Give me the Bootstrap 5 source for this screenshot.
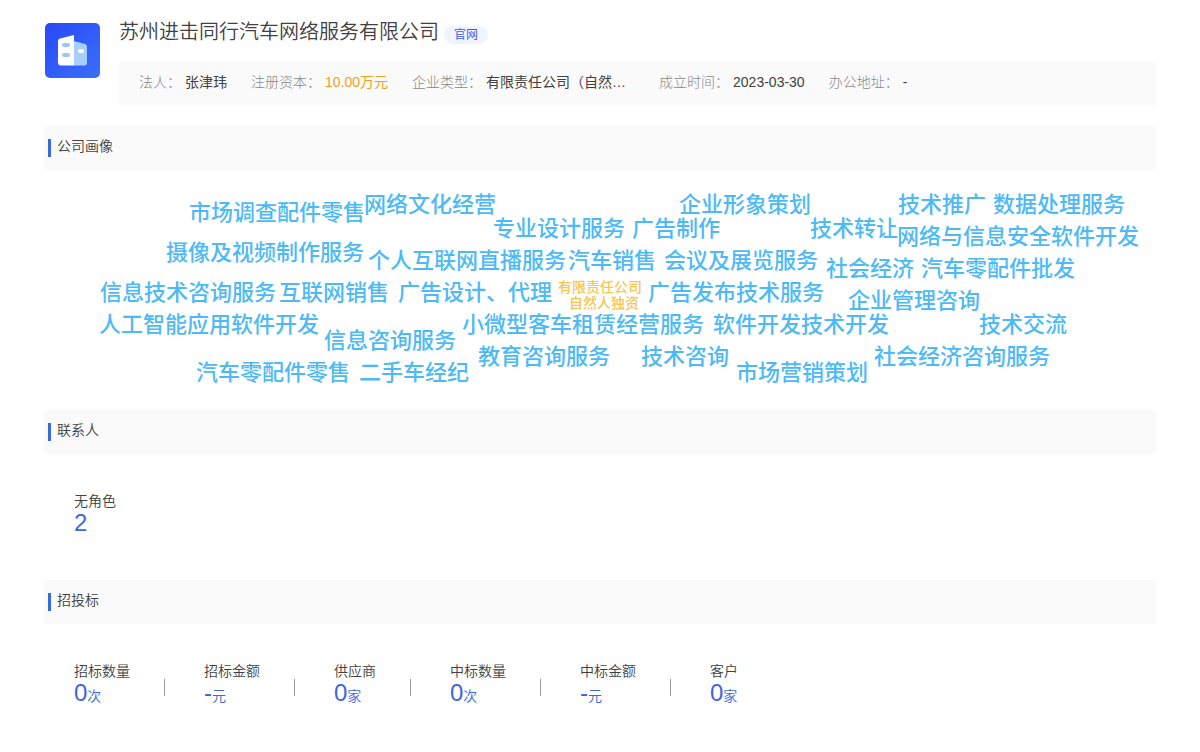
<!DOCTYPE html>
<html lang="zh-CN">
<head>
<meta charset="utf-8">
<meta name="viewport" content="width=device-width, initial-scale=1">
<title>苏州进击同行汽车网络服务有限公司</title>
<link href="https://cdn.jsdelivr.net/npm/bootstrap@5.3.0/dist/css/bootstrap.min.css" rel="stylesheet">
<style>
body { font-family: "Liberation Sans", "Noto Sans CJK SC", sans-serif; font-size: 14px; line-height: 20px; color: #404040; background: #fff; }
.page { padding: 20px 44px; }
.company-logo { width: 57px; height: 58px; padding: 3px 1px 0; }
.header-main { margin-left: 18px; }
.company-name { font-size: 20px; line-height: 24px; font-weight: 350; }
.site-link { font-size: 12px; line-height: 18px; padding: 0 10px; border-radius: 9px; background: #f0f4fe; color: #3a62ee; margin: 6px 0 0 5px; }
.panel { background: #fafafa; }
.facts { padding: 10px 20px 13px; margin-top: 18px; column-gap: 24px; }
.facts dt { font-weight: 300; color: #888; }
.facts dd { font-weight: 400; }
.facts .fact-long { width: 149px; }
.amount { color: #f0a020; }
.portrait { margin-top: 21px; }
.section-head { height: 44px; padding: 0 4px; column-gap: 6px; }
.section-head h2 { font-size: 14px; line-height: 20px; font-weight: 350; padding-bottom: 4px; }
.section-mark { width: 3px; height: 18px; background: #346ae2; }
.cloud { height: 240px; color: #4dbaf6; font-size: 22px; line-height: 34px; font-weight: 500; }
.cloud li { position: absolute; left: calc(50% + var(--x) * 1px); top: calc(var(--y) * 1px); white-space: nowrap; }
.cloud .core { font-size: 14px; line-height: 32px; color: #f9c552; }
.stats { padding: 37px 30px 0; }
.stats dt { font-weight: 350; }
.stats dd { color: #3a66e0; font-weight: 350; line-height: 24px; }
.stats .figure-num { font-size: 24px; font-weight: 400; }
.stat + .stat { margin-left: 34px; padding-left: 40px; background: linear-gradient(#999, #999) no-repeat 0 18px / 1px 17px; }
.contacts { height: 126px; }
</style>
</head>
<body>
<main class="page container-fluid">
  <header class="d-flex">
    <svg class="company-logo flex-shrink-0" viewBox="0 0 55 55" role="img" aria-label="公司">
      <defs><linearGradient id="tile" x1="0" y1="0" x2="1" y2="1"><stop offset="0" stop-color="#2848f8"/><stop offset="1" stop-color="#3a70fb"/></linearGradient></defs>
      <rect width="55" height="55" rx="5" fill="url(#tile)"/>
      <path d="M29 18l11 3q2 .6 2 2.500V40q0 2.500-2.500 2.500H29z" fill="#a6cffc"/>
      <path d="M15 15.500L29 12v30.500H16q-3 0-3-3V18q0-2 2-2.500z" fill="#fff"/>
      <rect x="17" y="20" width="8" height="4" rx="2" fill="#9cc4f5"/>
      <rect x="17" y="30" width="8" height="4" rx="2" fill="#9cc4f5"/>
      <rect x="33" y="26" width="6" height="4" rx="2" fill="#fff"/>
    </svg>
    <div class="flex-grow-1 header-main">
      <div class="d-flex align-items-start">
        <h1 class="company-name mb-0">苏州进击同行汽车网络服务有限公司</h1>
        <a class="site-link text-decoration-none" href="#">官网</a>
      </div>
      <dl class="facts panel d-flex flex-wrap mb-0">
        <div class="d-flex gap-1"><dt>法人：</dt><dd class="mb-0">张津玮</dd></div>
        <div class="d-flex gap-1"><dt>注册资本：</dt><dd class="mb-0 amount">10.00万元</dd></div>
        <div class="d-flex gap-1"><dt>企业类型：</dt><dd class="mb-0 fact-long">有限责任公司（自然…</dd></div>
        <div class="d-flex gap-1"><dt>成立时间：</dt><dd class="mb-0">2023-03-30</dd></div>
        <div class="d-flex gap-1"><dt>办公地址：</dt><dd class="mb-0">-</dd></div>
      </dl>
    </div>
  </header>

  <section class="portrait">
    <div class="section-head panel d-flex align-items-center"><span class="section-mark"></span><h2 class="mb-0">公司画像</h2></div>
    <ul class="cloud position-relative list-unstyled mb-0">
      <li style="--x:-411;--y:26">市场调查配件零售</li>
      <li style="--x:-236;--y:18">网络文化经营</li>
      <li style="--x:79;--y:18">企业形象策划</li>
      <li style="--x:298;--y:18">技术推广</li>
      <li style="--x:393;--y:18">数据处理服务</li>
      <li style="--x:-107;--y:42">专业设计服务</li>
      <li style="--x:32;--y:42">广告制作</li>
      <li style="--x:210;--y:42">技术转让</li>
      <li style="--x:297;--y:50">网络与信息安全软件开发</li>
      <li style="--x:-434;--y:66">摄像及视频制作服务</li>
      <li style="--x:-232;--y:74">个人互联网直播服务</li>
      <li style="--x:-32;--y:74">汽车销售</li>
      <li style="--x:64;--y:74">会议及展览服务</li>
      <li style="--x:226;--y:82">社会经济</li>
      <li style="--x:321;--y:82">汽车零配件批发</li>
      <li style="--x:-500;--y:106">信息技术咨询服务</li>
      <li style="--x:-321;--y:106">互联网销售</li>
      <li style="--x:-202;--y:106">广告设计、代理</li>
      <li class="core" style="--x:-42;--y:101">有限责任公司</li>
      <li class="core" style="--x:-31;--y:117">自然人独资</li>
      <li style="--x:48;--y:106">广告发布技术服务</li>
      <li style="--x:248;--y:114">企业管理咨询</li>
      <li style="--x:-501;--y:138">人工智能应用软件开发</li>
      <li style="--x:-276;--y:154">信息咨询服务</li>
      <li style="--x:-138;--y:138">小微型客车租赁经营服务</li>
      <li style="--x:113;--y:138">软件开发技术开发</li>
      <li style="--x:379;--y:138">技术交流</li>
      <li style="--x:-122;--y:170">教育咨询服务</li>
      <li style="--x:41;--y:170">技术咨询</li>
      <li style="--x:136;--y:186">市场营销策划</li>
      <li style="--x:274;--y:170">社会经济咨询服务</li>
      <li style="--x:-404;--y:186">汽车零配件零售</li>
      <li style="--x:-241;--y:186">二手车经纪</li>
    </ul>
  </section>

  <section>
    <div class="section-head panel d-flex align-items-center"><span class="section-mark"></span><h2 class="mb-0">联系人</h2></div>
    <dl class="stats contacts d-flex mb-0">
      <div class="stat"><dt>无角色</dt><dd class="mb-0"><span class="figure-num">2</span></dd></div>
    </dl>
  </section>

  <section>
    <div class="section-head panel d-flex align-items-center"><span class="section-mark"></span><h2 class="mb-0">招投标</h2></div>
    <dl class="stats d-flex flex-wrap mb-0">
      <div class="stat"><dt>招标数量</dt><dd class="mb-0"><span class="figure-num">0</span>次</dd></div>
      <div class="stat"><dt>招标金额</dt><dd class="mb-0"><span class="figure-num">-</span>元</dd></div>
      <div class="stat"><dt>供应商</dt><dd class="mb-0"><span class="figure-num">0</span>家</dd></div>
      <div class="stat"><dt>中标数量</dt><dd class="mb-0"><span class="figure-num">0</span>次</dd></div>
      <div class="stat"><dt>中标金额</dt><dd class="mb-0"><span class="figure-num">-</span>元</dd></div>
      <div class="stat"><dt>客户</dt><dd class="mb-0"><span class="figure-num">0</span>家</dd></div>
    </dl>
  </section>
</main>
<script src="https://cdn.jsdelivr.net/npm/bootstrap@5.3.0/dist/js/bootstrap.bundle.min.js"></script>
</body>
</html>
